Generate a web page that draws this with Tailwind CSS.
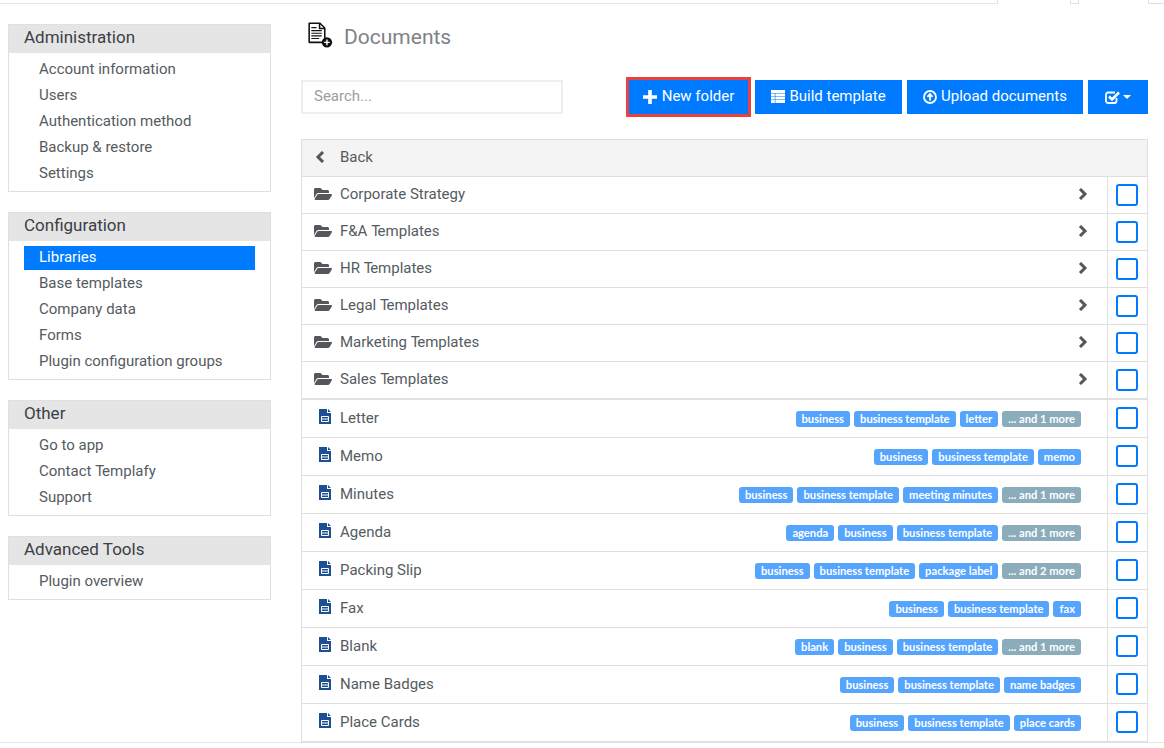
<!DOCTYPE html>
<html lang="en">
<head>
<meta charset="UTF-8">
<title>Documents</title>
<script src="https://cdn.jsdelivr.net/npm/@tailwindcss/browser@4"></script>
</head>
<body class="bg-white font-['Roboto',sans-serif] text-[15px] text-[#555b61] h-[748px] overflow-hidden">
  <!-- top strip with the tab edges -->
  <div class="h-[4px] flex">
    <div class="w-[997px] border-b border-[#e6e6e6]"></div>
    <div class="w-[73px] border-l border-[#e0e0e0]"></div>
    <div class="w-[9px] border-x border-b border-[#e0e0e0]"></div>
    <div class="w-[69px]"></div>
    <div class="flex-1 border-l border-b border-[#e0e0e0]"></div>
  </div>
  <div class="flex h-[739px] border-b border-[#e6e6e6]">
    <!-- sidebar -->
    <aside class="w-[263px] ml-[8px] mt-[20px] flex flex-col gap-[20px] shrink-0">
      <section class="border border-[#e0e0e0]">
        <h3 class="h-[28px] bg-[#e5e5e5] pl-[15px] text-[17px] leading-[24px] text-[#3b4045]">Administration</h3>
        <ul class="pt-[3px] pb-[5px] px-[15px]">
          <li class="h-[26px] leading-[26px] pl-[15px]">Account information</li>
          <li class="h-[26px] leading-[26px] pl-[15px]">Users</li>
          <li class="h-[26px] leading-[26px] pl-[15px]">Authentication method</li>
          <li class="h-[26px] leading-[26px] pl-[15px]">Backup &amp; restore</li>
          <li class="h-[26px] leading-[26px] pl-[15px]">Settings</li>
        </ul>
      </section>
      <section class="border border-[#e0e0e0]">
        <h3 class="h-[28px] bg-[#e5e5e5] pl-[15px] text-[17px] leading-[24px] text-[#3b4045]">Configuration</h3>
        <ul class="pt-[5px] pb-[5px] px-[15px]">
          <li class="h-[24px] leading-[23px] pl-[15px] bg-[#007bff] text-white">Libraries</li>
          <li class="h-[26px] leading-[26px] pl-[15px]">Base templates</li>
          <li class="h-[26px] leading-[26px] pl-[15px]">Company data</li>
          <li class="h-[26px] leading-[26px] pl-[15px]">Forms</li>
          <li class="h-[26px] leading-[26px] pl-[15px]">Plugin configuration groups</li>
        </ul>
      </section>
      <section class="border border-[#e0e0e0]">
        <h3 class="h-[28px] bg-[#e5e5e5] pl-[15px] text-[17px] leading-[24px] text-[#3b4045]">Other</h3>
        <ul class="pt-[3px] pb-[5px] px-[15px]">
          <li class="h-[26px] leading-[26px] pl-[15px]">Go to app</li>
          <li class="h-[26px] leading-[26px] pl-[15px]">Contact <span class="tracking-[-2px]">T</span>emplafy</li>
          <li class="h-[26px] leading-[26px] pl-[15px]">Support</li>
        </ul>
      </section>
      <section class="border border-[#e0e0e0]">
        <h3 class="h-[28px] bg-[#e5e5e5] pl-[15px] text-[17px] leading-[24px] text-[#3b4045]">Advanced Tools</h3>
        <ul class="pt-[3px] pb-[5px] px-[15px]">
          <li class="h-[26px] leading-[26px] pl-[15px]">Plugin overview</li>
        </ul>
      </section>
    </aside>

    <!-- main -->
    <main class="w-[847px] ml-[30px] shrink-0">
      <div class="h-[76px] flex items-start pt-[18px]">
        <svg class="w-[26px] h-[26px] ml-[6px]" viewBox="0 0 30 30">
          <path d="M2.5 1.5h12.5l5.5 5.5v16.5h-18z" fill="#fff" stroke="#111" stroke-width="1.8" stroke-linejoin="round"/>
          <path d="M14.5 1.5v6h6" fill="none" stroke="#111" stroke-width="1.8"/>
          <path d="M5 6.5h6M5 10h12M5 13h12M5 16h12M5 19h9" stroke="#111" stroke-width="1.3"/>
          <circle cx="23" cy="23.5" r="6" fill="#111"/>
          <path d="M23 20.3v6.4M19.8 23.5h6.4" stroke="#fff" stroke-width="1.6"/>
        </svg>
        <h1 class="ml-[11px] text-[21px] leading-[30px] text-[#7d8287]">Documents</h1>
      </div>

      <div class="flex items-center h-[34px] mb-[25px]">
        <div class="w-[262px] h-[34px] border-2 border-[#eeeeee] pl-[11px] leading-[28px] text-[#9a9ea2]">Search...</div>
        <button class="ml-[63px] w-[125px] h-[40px] -my-[3px] pb-[1px] border-[3px] border-[#e8413f] bg-[#007bff] text-white flex items-center justify-center gap-[5px]">
          <svg class="w-[14px] h-[14px]" viewBox="0 0 14 14" fill="currentColor"><path d="M5.2 0h3.6v5.2H14v3.6H8.8V14H5.2V8.8H0V5.2h5.2z"/></svg>
          New folder
        </button>
        <button class="ml-[4px] w-[147px] h-[34px] pb-[1px] bg-[#007bff] text-white flex items-center justify-center gap-[4px]">
          <svg class="w-[14px] h-[13px]" viewBox="0 0 14 13" fill="currentColor"><path d="M0 0h14v3H0zM0 3.6h3.8v2.6H0zM4.4 3.6H14v2.6H4.4zM0 6.8h3.8v2.6H0zM4.4 6.8H14v2.6H4.4zM0 10h3.8v3H0zM4.4 10H14v3H4.4z"/></svg>
          Build template
        </button>
        <button class="ml-[5px] w-[176px] h-[34px] pb-[1px] bg-[#007bff] text-white flex items-center justify-center gap-[4px]">
          <svg class="w-[14px] h-[14px]" viewBox="0 0 14 14"><circle cx="7" cy="7" r="6" fill="none" stroke="currentColor" stroke-width="1.8"/><path d="M7 10.5V4.2M4.4 6.8L7 4l2.6 2.8" fill="none" stroke="currentColor" stroke-width="1.8"/></svg>
          Upload documents
        </button>
        <button class="ml-[5px] w-[60px] h-[34px] pb-[1px] bg-[#007bff] text-white flex items-center justify-center gap-[3px]">
          <svg class="w-[15px] h-[14px]" viewBox="0 0 15 14" fill="none" stroke="currentColor"><path d="M11.5 8v3a2 2 0 0 1-2 2H3a2 2 0 0 1-2-2V4.5a2 2 0 0 1 2-2h7" stroke-width="1.8"/><path d="M4 6.5L7 9.5 14 2.5" stroke-width="2.6"/></svg>
          <svg class="w-[8px] h-[4px]" viewBox="0 0 8 4" fill="currentColor"><path d="M0 0h8L4 4z"/></svg>
        </button>
      </div>

      <div class="border-x border-t border-b-2 border-[#e0e0e0]">
        <div class="h-[37px] bg-[#f4f4f4] border-b border-[#e0e0e0] flex items-center">
          <svg class="w-[10px] h-[12px] ml-[13px] mr-[15px] -mt-[2px] text-[#54585c]" viewBox="0 0 10 12" fill="none" stroke="currentColor" stroke-width="3"><path d="M8 1L3 6l5 5"/></svg>
          <span class="pb-[2px]">Back</span>
        </div>

        <div class="h-[37px] border-b border-[#e0e0e0] flex items-center">
          <svg class="w-[18px] h-[16px] ml-[12px] mr-[8px] -mt-[2px] text-[#54585c]" viewBox="0 0 576 512" fill="currentColor"><path d="M572.694 292.093L500.27 416.248A63.997 63.997 0 0 1 444.989 448H45.025c-18.523 0-30.064-20.093-20.731-36.093l72.424-124.155A64 64 0 0 1 152 256h399.964c18.523 0 30.064 20.093 20.73 36.093zM152 224h328v-48c0-26.51-21.49-48-48-48H272l-64-64H48C21.49 64 0 85.49 0 112v278.046l69.077-118.418C86.214 242.25 117.989 224 152 224z"/></svg>
          <span class="flex-1 pb-[2px]">Corporate Strategy</span>
          <svg class="w-[10px] h-[12px] mr-[19px] -mt-[2px] text-[#54585c]" viewBox="0 0 10 12" fill="none" stroke="currentColor" stroke-width="3"><path d="M2 1l5 5-5 5"/></svg>
          <div class="w-[40px] h-full border-l border-[#e0e0e0] flex items-center pl-[8px]"><div class="w-[22px] h-[22px] border-2 border-[#007bff] rounded-[3px]"></div></div>
        </div>
        <div class="h-[37px] border-b border-[#e0e0e0] flex items-center">
          <svg class="w-[18px] h-[16px] ml-[12px] mr-[8px] -mt-[2px] text-[#54585c]" viewBox="0 0 576 512" fill="currentColor"><path d="M572.694 292.093L500.27 416.248A63.997 63.997 0 0 1 444.989 448H45.025c-18.523 0-30.064-20.093-20.731-36.093l72.424-124.155A64 64 0 0 1 152 256h399.964c18.523 0 30.064 20.093 20.73 36.093zM152 224h328v-48c0-26.51-21.49-48-48-48H272l-64-64H48C21.49 64 0 85.49 0 112v278.046l69.077-118.418C86.214 242.25 117.989 224 152 224z"/></svg>
          <span class="flex-1 pb-[2px]">F&amp;A <span class="tracking-[-2.5px]">T</span>emplates</span>
          <svg class="w-[10px] h-[12px] mr-[19px] -mt-[2px] text-[#54585c]" viewBox="0 0 10 12" fill="none" stroke="currentColor" stroke-width="3"><path d="M2 1l5 5-5 5"/></svg>
          <div class="w-[40px] h-full border-l border-[#e0e0e0] flex items-center pl-[8px]"><div class="w-[22px] h-[22px] border-2 border-[#007bff] rounded-[3px]"></div></div>
        </div>
        <div class="h-[37px] border-b border-[#e0e0e0] flex items-center">
          <svg class="w-[18px] h-[16px] ml-[12px] mr-[8px] -mt-[2px] text-[#54585c]" viewBox="0 0 576 512" fill="currentColor"><path d="M572.694 292.093L500.27 416.248A63.997 63.997 0 0 1 444.989 448H45.025c-18.523 0-30.064-20.093-20.731-36.093l72.424-124.155A64 64 0 0 1 152 256h399.964c18.523 0 30.064 20.093 20.73 36.093zM152 224h328v-48c0-26.51-21.49-48-48-48H272l-64-64H48C21.49 64 0 85.49 0 112v278.046l69.077-118.418C86.214 242.25 117.989 224 152 224z"/></svg>
          <span class="flex-1 pb-[2px]">HR <span class="tracking-[-2.5px]">T</span>emplates</span>
          <svg class="w-[10px] h-[12px] mr-[19px] -mt-[2px] text-[#54585c]" viewBox="0 0 10 12" fill="none" stroke="currentColor" stroke-width="3"><path d="M2 1l5 5-5 5"/></svg>
          <div class="w-[40px] h-full border-l border-[#e0e0e0] flex items-center pl-[8px]"><div class="w-[22px] h-[22px] border-2 border-[#007bff] rounded-[3px]"></div></div>
        </div>
        <div class="h-[37px] border-b border-[#e0e0e0] flex items-center">
          <svg class="w-[18px] h-[16px] ml-[12px] mr-[8px] -mt-[2px] text-[#54585c]" viewBox="0 0 576 512" fill="currentColor"><path d="M572.694 292.093L500.27 416.248A63.997 63.997 0 0 1 444.989 448H45.025c-18.523 0-30.064-20.093-20.731-36.093l72.424-124.155A64 64 0 0 1 152 256h399.964c18.523 0 30.064 20.093 20.73 36.093zM152 224h328v-48c0-26.51-21.49-48-48-48H272l-64-64H48C21.49 64 0 85.49 0 112v278.046l69.077-118.418C86.214 242.25 117.989 224 152 224z"/></svg>
          <span class="flex-1 pb-[2px]">Legal <span class="tracking-[-2.5px]">T</span>emplates</span>
          <svg class="w-[10px] h-[12px] mr-[19px] -mt-[2px] text-[#54585c]" viewBox="0 0 10 12" fill="none" stroke="currentColor" stroke-width="3"><path d="M2 1l5 5-5 5"/></svg>
          <div class="w-[40px] h-full border-l border-[#e0e0e0] flex items-center pl-[8px]"><div class="w-[22px] h-[22px] border-2 border-[#007bff] rounded-[3px]"></div></div>
        </div>
        <div class="h-[37px] border-b border-[#e0e0e0] flex items-center">
          <svg class="w-[18px] h-[16px] ml-[12px] mr-[8px] -mt-[2px] text-[#54585c]" viewBox="0 0 576 512" fill="currentColor"><path d="M572.694 292.093L500.27 416.248A63.997 63.997 0 0 1 444.989 448H45.025c-18.523 0-30.064-20.093-20.731-36.093l72.424-124.155A64 64 0 0 1 152 256h399.964c18.523 0 30.064 20.093 20.73 36.093zM152 224h328v-48c0-26.51-21.49-48-48-48H272l-64-64H48C21.49 64 0 85.49 0 112v278.046l69.077-118.418C86.214 242.25 117.989 224 152 224z"/></svg>
          <span class="flex-1 pb-[2px]">Marketing <span class="tracking-[-2.5px]">T</span>emplates</span>
          <svg class="w-[10px] h-[12px] mr-[19px] -mt-[2px] text-[#54585c]" viewBox="0 0 10 12" fill="none" stroke="currentColor" stroke-width="3"><path d="M2 1l5 5-5 5"/></svg>
          <div class="w-[40px] h-full border-l border-[#e0e0e0] flex items-center pl-[8px]"><div class="w-[22px] h-[22px] border-2 border-[#007bff] rounded-[3px]"></div></div>
        </div>
        <div class="h-[38px] border-b-2 border-[#e0e0e0] flex items-center">
          <svg class="w-[18px] h-[16px] ml-[12px] mr-[8px] -mt-[2px] text-[#54585c]" viewBox="0 0 576 512" fill="currentColor"><path d="M572.694 292.093L500.27 416.248A63.997 63.997 0 0 1 444.989 448H45.025c-18.523 0-30.064-20.093-20.731-36.093l72.424-124.155A64 64 0 0 1 152 256h399.964c18.523 0 30.064 20.093 20.73 36.093zM152 224h328v-48c0-26.51-21.49-48-48-48H272l-64-64H48C21.49 64 0 85.49 0 112v278.046l69.077-118.418C86.214 242.25 117.989 224 152 224z"/></svg>
          <span class="flex-1 pb-[2px]">Sales <span class="tracking-[-2.5px]">T</span>emplates</span>
          <svg class="w-[10px] h-[12px] mr-[19px] -mt-[2px] text-[#54585c]" viewBox="0 0 10 12" fill="none" stroke="currentColor" stroke-width="3"><path d="M2 1l5 5-5 5"/></svg>
          <div class="w-[40px] h-full border-l border-[#e0e0e0] flex items-center pl-[8px]"><div class="w-[22px] h-[22px] border-2 border-[#007bff] rounded-[3px]"></div></div>
        </div>

        <!-- documents -->
        <div class="h-[38px] border-b border-[#e0e0e0] flex items-center">
          <svg class="w-[12px] h-[15px] ml-[17px] mr-[9px] -mt-[4px] text-[#1d4f91]" viewBox="0 0 12 15"><path d="M0 0h8v4h4v11H0zM9 0l3 3H9z" fill="currentColor"/><path d="M2.5 7.5h7v5h-7zM2.5 10h7" fill="none" stroke="#fff"/></svg>
          <span class="flex-1">Letter</span>
          <div class="flex gap-[4px] mr-[26px] font-['Lato',sans-serif] text-[11.2px] font-bold text-white leading-[16px]">
            <span class="bg-[#55a5ff] rounded-[3px] px-[6px]">business</span>
            <span class="bg-[#55a5ff] rounded-[3px] px-[6px]">business template</span>
            <span class="bg-[#55a5ff] rounded-[3px] px-[6px]">letter</span>
            <span class="bg-[#8bacbb] rounded-[3px] px-[6px]">... and 1 more</span>
          </div>
          <div class="w-[40px] h-full border-l border-[#e0e0e0] flex items-center pl-[8px]"><div class="w-[22px] h-[22px] -mt-[1px] border-2 border-[#007bff] rounded-[3px]"></div></div>
        </div>
        <div class="h-[38px] border-b border-[#e0e0e0] flex items-center">
          <svg class="w-[12px] h-[15px] ml-[17px] mr-[9px] -mt-[4px] text-[#1d4f91]" viewBox="0 0 12 15"><path d="M0 0h8v4h4v11H0zM9 0l3 3H9z" fill="currentColor"/><path d="M2.5 7.5h7v5h-7zM2.5 10h7" fill="none" stroke="#fff"/></svg>
          <span class="flex-1">Memo</span>
          <div class="flex gap-[4px] mr-[26px] font-['Lato',sans-serif] text-[11.2px] font-bold text-white leading-[16px]">
            <span class="bg-[#55a5ff] rounded-[3px] px-[6px]">business</span>
            <span class="bg-[#55a5ff] rounded-[3px] px-[6px]">business template</span>
            <span class="bg-[#55a5ff] rounded-[3px] px-[6px]">memo</span>
          </div>
          <div class="w-[40px] h-full border-l border-[#e0e0e0] flex items-center pl-[8px]"><div class="w-[22px] h-[22px] -mt-[1px] border-2 border-[#007bff] rounded-[3px]"></div></div>
        </div>
        <div class="h-[38px] border-b border-[#e0e0e0] flex items-center">
          <svg class="w-[12px] h-[15px] ml-[17px] mr-[9px] -mt-[4px] text-[#1d4f91]" viewBox="0 0 12 15"><path d="M0 0h8v4h4v11H0zM9 0l3 3H9z" fill="currentColor"/><path d="M2.5 7.5h7v5h-7zM2.5 10h7" fill="none" stroke="#fff"/></svg>
          <span class="flex-1">Minutes</span>
          <div class="flex gap-[4px] mr-[26px] font-['Lato',sans-serif] text-[11.2px] font-bold text-white leading-[16px]">
            <span class="bg-[#55a5ff] rounded-[3px] px-[6px]">business</span>
            <span class="bg-[#55a5ff] rounded-[3px] px-[6px]">business template</span>
            <span class="bg-[#55a5ff] rounded-[3px] px-[6px]">meeting minutes</span>
            <span class="bg-[#8bacbb] rounded-[3px] px-[6px]">... and 1 more</span>
          </div>
          <div class="w-[40px] h-full border-l border-[#e0e0e0] flex items-center pl-[8px]"><div class="w-[22px] h-[22px] -mt-[1px] border-2 border-[#007bff] rounded-[3px]"></div></div>
        </div>
        <div class="h-[38px] border-b border-[#e0e0e0] flex items-center">
          <svg class="w-[12px] h-[15px] ml-[17px] mr-[9px] -mt-[4px] text-[#1d4f91]" viewBox="0 0 12 15"><path d="M0 0h8v4h4v11H0zM9 0l3 3H9z" fill="currentColor"/><path d="M2.5 7.5h7v5h-7zM2.5 10h7" fill="none" stroke="#fff"/></svg>
          <span class="flex-1">Agenda</span>
          <div class="flex gap-[4px] mr-[26px] font-['Lato',sans-serif] text-[11.2px] font-bold text-white leading-[16px]">
            <span class="bg-[#55a5ff] rounded-[3px] px-[6px]">agenda</span>
            <span class="bg-[#55a5ff] rounded-[3px] px-[6px]">business</span>
            <span class="bg-[#55a5ff] rounded-[3px] px-[6px]">business template</span>
            <span class="bg-[#8bacbb] rounded-[3px] px-[6px]">... and 1 more</span>
          </div>
          <div class="w-[40px] h-full border-l border-[#e0e0e0] flex items-center pl-[8px]"><div class="w-[22px] h-[22px] -mt-[1px] border-2 border-[#007bff] rounded-[3px]"></div></div>
        </div>
        <div class="h-[38px] border-b border-[#e0e0e0] flex items-center">
          <svg class="w-[12px] h-[15px] ml-[17px] mr-[9px] -mt-[4px] text-[#1d4f91]" viewBox="0 0 12 15"><path d="M0 0h8v4h4v11H0zM9 0l3 3H9z" fill="currentColor"/><path d="M2.5 7.5h7v5h-7zM2.5 10h7" fill="none" stroke="#fff"/></svg>
          <span class="flex-1">Packing Slip</span>
          <div class="flex gap-[4px] mr-[26px] font-['Lato',sans-serif] text-[11.2px] font-bold text-white leading-[16px]">
            <span class="bg-[#55a5ff] rounded-[3px] px-[6px]">business</span>
            <span class="bg-[#55a5ff] rounded-[3px] px-[6px]">business template</span>
            <span class="bg-[#55a5ff] rounded-[3px] px-[6px]">package label</span>
            <span class="bg-[#8bacbb] rounded-[3px] px-[6px]">... and 2 more</span>
          </div>
          <div class="w-[40px] h-full border-l border-[#e0e0e0] flex items-center pl-[8px]"><div class="w-[22px] h-[22px] -mt-[1px] border-2 border-[#007bff] rounded-[3px]"></div></div>
        </div>
        <div class="h-[38px] border-b border-[#e0e0e0] flex items-center">
          <svg class="w-[12px] h-[15px] ml-[17px] mr-[9px] -mt-[4px] text-[#1d4f91]" viewBox="0 0 12 15"><path d="M0 0h8v4h4v11H0zM9 0l3 3H9z" fill="currentColor"/><path d="M2.5 7.5h7v5h-7zM2.5 10h7" fill="none" stroke="#fff"/></svg>
          <span class="flex-1">Fax</span>
          <div class="flex gap-[4px] mr-[26px] font-['Lato',sans-serif] text-[11.2px] font-bold text-white leading-[16px]">
            <span class="bg-[#55a5ff] rounded-[3px] px-[6px]">business</span>
            <span class="bg-[#55a5ff] rounded-[3px] px-[6px]">business template</span>
            <span class="bg-[#55a5ff] rounded-[3px] px-[6px]">fax</span>
          </div>
          <div class="w-[40px] h-full border-l border-[#e0e0e0] flex items-center pl-[8px]"><div class="w-[22px] h-[22px] -mt-[1px] border-2 border-[#007bff] rounded-[3px]"></div></div>
        </div>
        <div class="h-[38px] border-b border-[#e0e0e0] flex items-center">
          <svg class="w-[12px] h-[15px] ml-[17px] mr-[9px] -mt-[4px] text-[#1d4f91]" viewBox="0 0 12 15"><path d="M0 0h8v4h4v11H0zM9 0l3 3H9z" fill="currentColor"/><path d="M2.5 7.5h7v5h-7zM2.5 10h7" fill="none" stroke="#fff"/></svg>
          <span class="flex-1">Blank</span>
          <div class="flex gap-[4px] mr-[26px] font-['Lato',sans-serif] text-[11.2px] font-bold text-white leading-[16px]">
            <span class="bg-[#55a5ff] rounded-[3px] px-[6px]">blank</span>
            <span class="bg-[#55a5ff] rounded-[3px] px-[6px]">business</span>
            <span class="bg-[#55a5ff] rounded-[3px] px-[6px]">business template</span>
            <span class="bg-[#8bacbb] rounded-[3px] px-[6px]">... and 1 more</span>
          </div>
          <div class="w-[40px] h-full border-l border-[#e0e0e0] flex items-center pl-[8px]"><div class="w-[22px] h-[22px] -mt-[1px] border-2 border-[#007bff] rounded-[3px]"></div></div>
        </div>
        <div class="h-[38px] border-b border-[#e0e0e0] flex items-center">
          <svg class="w-[12px] h-[15px] ml-[17px] mr-[9px] -mt-[4px] text-[#1d4f91]" viewBox="0 0 12 15"><path d="M0 0h8v4h4v11H0zM9 0l3 3H9z" fill="currentColor"/><path d="M2.5 7.5h7v5h-7zM2.5 10h7" fill="none" stroke="#fff"/></svg>
          <span class="flex-1">Name Badges</span>
          <div class="flex gap-[4px] mr-[26px] font-['Lato',sans-serif] text-[11.2px] font-bold text-white leading-[16px]">
            <span class="bg-[#55a5ff] rounded-[3px] px-[6px]">business</span>
            <span class="bg-[#55a5ff] rounded-[3px] px-[6px]">business template</span>
            <span class="bg-[#55a5ff] rounded-[3px] px-[6px]">name badges</span>
          </div>
          <div class="w-[40px] h-full border-l border-[#e0e0e0] flex items-center pl-[8px]"><div class="w-[22px] h-[22px] -mt-[1px] border-2 border-[#007bff] rounded-[3px]"></div></div>
        </div>
        <div class="h-[37px] flex items-center">
          <svg class="w-[12px] h-[15px] ml-[17px] mr-[9px] -mt-[4px] text-[#1d4f91]" viewBox="0 0 12 15"><path d="M0 0h8v4h4v11H0zM9 0l3 3H9z" fill="currentColor"/><path d="M2.5 7.5h7v5h-7zM2.5 10h7" fill="none" stroke="#fff"/></svg>
          <span class="flex-1">Place Cards</span>
          <div class="flex gap-[4px] mr-[26px] font-['Lato',sans-serif] text-[11.2px] font-bold text-white leading-[16px]">
            <span class="bg-[#55a5ff] rounded-[3px] px-[6px]">business</span>
            <span class="bg-[#55a5ff] rounded-[3px] px-[6px]">business template</span>
            <span class="bg-[#55a5ff] rounded-[3px] px-[6px]">place cards</span>
          </div>
          <div class="w-[40px] h-full border-l border-[#e0e0e0] flex items-center pl-[8px]"><div class="w-[22px] h-[22px] -mt-[1px] border-2 border-[#007bff] rounded-[3px]"></div></div>
        </div>
      </div>
    </main>
  </div>
</body>
</html>
